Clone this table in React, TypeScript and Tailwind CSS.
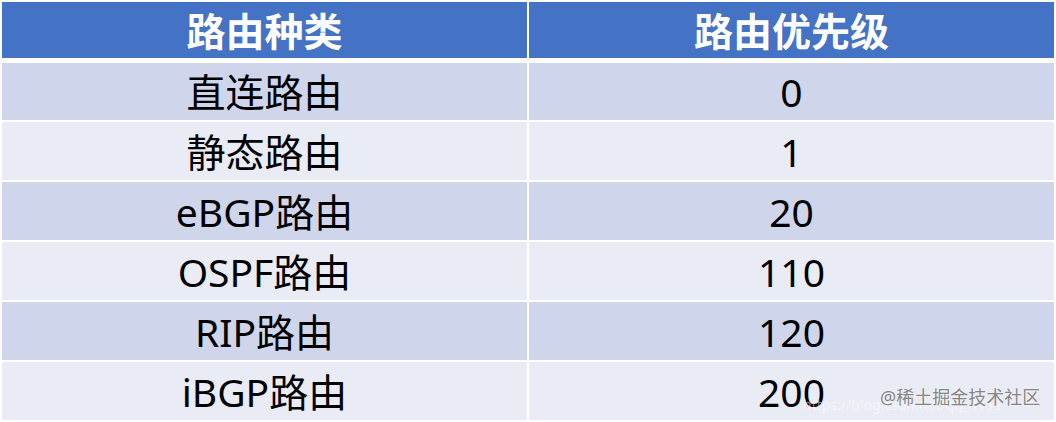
const rows: [string, string][] = [
  ["直连路由", "0"],
  ["静态路由", "1"],
  ["eBGP路由", "20"],
  ["OSPF路由", "110"],
  ["RIP路由", "120"],
  ["iBGP路由", "200"],
];

const font = "font-['Noto_Sans','Noto_Sans_CJK_SC',sans-serif]";

export default function App() {
  return (
    <div className={`relative h-[422px] w-[1056px] overflow-hidden bg-white p-[2px] ${font}`}>
      <div className="flex flex-col">
        <div className="grid h-[56px] grid-cols-2 gap-x-[2px] text-[39px] font-bold leading-none text-white">
          <div className="flex items-center justify-center bg-[#4472c4]">路由种类</div>
          <div className="flex items-center justify-center bg-[#4472c4]">路由优先级</div>
        </div>
        <div className="mt-[5px] flex flex-col gap-[2px]">
          {rows.map(([name, pref], i) => (
            <div
              key={name}
              className={`grid grid-cols-2 gap-x-[2px] text-[39px] leading-none text-black ${
                i === 0 ? "h-[57px]" : "h-[58px]"
              }`}
            >
              <div
                className={`flex items-center justify-center ${
                  i % 2 === 0 ? "bg-[#cfd5ea]" : "bg-[#e9ebf5]"
                }`}
              >
                {name}
              </div>
              <div
                className={`flex items-center justify-center ${
                  i % 2 === 0 ? "bg-[#cfd5ea]" : "bg-[#e9ebf5]"
                }`}
              >
                {pref}
              </div>
            </div>
          ))}
        </div>
      </div>

      {/* watermarks */}
      <div className="absolute left-[803px] top-[398px] whitespace-nowrap text-[14px] leading-none text-white/50">
        https://blog.csdn.net/qq_4159
      </div>
      <div className="absolute left-[880px] top-[388px] whitespace-nowrap text-[18px] leading-none text-[#858585] [text-shadow:0_0_2px_#fff]">
        @稀土掘金技术社区
      </div>
    </div>
  );
}
